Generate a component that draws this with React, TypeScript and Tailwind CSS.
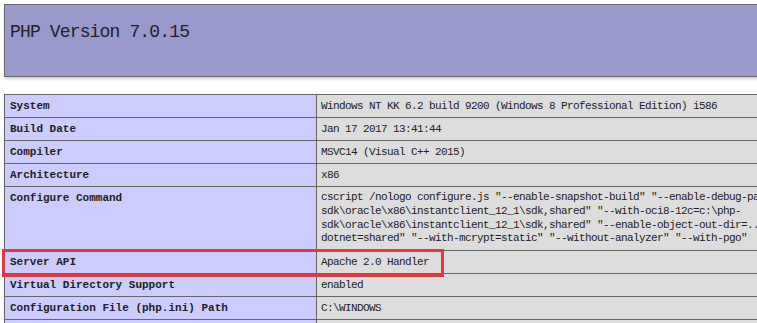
import React from "react";

const mono = { fontFamily: '"Liberation Mono", "DejaVu Sans Mono", monospace' };

type Row = { label: string; value: React.ReactNode; multi?: boolean; highlight?: boolean };

const configureLines = [
  'cscript /nologo configure.js "--enable-snapshot-build" "--enable-debug-pack" "--with-pdo-oci=c:\\php-',
  'sdk\\oracle\\x86\\instantclient_12_1\\sdk,shared" "--with-oci8-12c=c:\\php-',
  'sdk\\oracle\\x86\\instantclient_12_1\\sdk,shared" "--enable-object-out-dir=../obj/" "--enable-com-',
  'dotnet=shared" "--with-mcrypt=static" "--without-analyzer" "--with-pgo"',
];

const rows: Row[] = [
  { label: "System", value: "Windows NT KK 6.2 build 9200 (Windows 8 Professional Edition) i586" },
  { label: "Build Date", value: "Jan 17 2017 13:41:44" },
  { label: "Compiler", value: "MSVC14 (Visual C++ 2015)" },
  { label: "Architecture", value: "x86" },
  {
    label: "Configure Command",
    multi: true,
    value: (
      <>
        {configureLines.map((l, i) => (
          <div key={i} className="whitespace-nowrap">
            {l}
          </div>
        ))}
      </>
    ),
  },
  { label: "Server API", value: "Apache 2.0 Handler", highlight: true },
  { label: "Virtual Directory Support", value: "enabled" },
  { label: "Configuration File (php.ini) Path", value: "C:\\WINDOWS" },
  { label: "Loaded Configuration File", value: "C:\\php\\php.ini" },
];

export default function App() {
  return (
    <div className="w-[757px] h-[323px] overflow-hidden bg-white text-[#222]" style={mono}>
      <div className="pl-[4px] pt-[4px] w-[960px]">
        <div className="w-[934px] h-[73px] border border-[#666] bg-[#99c] shadow-[1px_2px_3px_#ccc] pl-[5px] pt-[17px]">
          <h1 className="text-[18px] leading-[20px] tracking-[-0.85px] font-normal">PHP Version 7.0.15</h1>
        </div>
        <div className="relative mt-[17px]">
          <table className="w-[934px] table-fixed border-collapse shadow-[1px_2px_3px_#ccc]">
            <colgroup>
              <col className="w-[312px]" />
              <col />
            </colgroup>
            <tbody>
              {rows.map((r) => (
                <tr key={r.label}>
                  <td className="border border-[#666] bg-[#ccf] pl-[5px] pr-[5px] py-[4px] align-top text-[11px] leading-[14px] font-bold whitespace-nowrap overflow-hidden">
                    {r.label}
                  </td>
                  <td
                    className={
                      "border border-[#666] bg-[#ddd] pl-[4px] pr-[5px] py-[4px] align-top text-[11px] tracking-[-0.6px] whitespace-nowrap overflow-hidden " +
                      (r.multi ? "leading-[13.75px]" : "leading-[14px]")
                    }
                  >
                    {r.value}
                  </td>
                </tr>
              ))}
            </tbody>
          </table>
          <div className="absolute left-[-2px] top-[155px] w-[442px] h-[28px] border-[3px] border-[#e0393e] pointer-events-none" />
        </div>
      </div>
    </div>
  );
}
